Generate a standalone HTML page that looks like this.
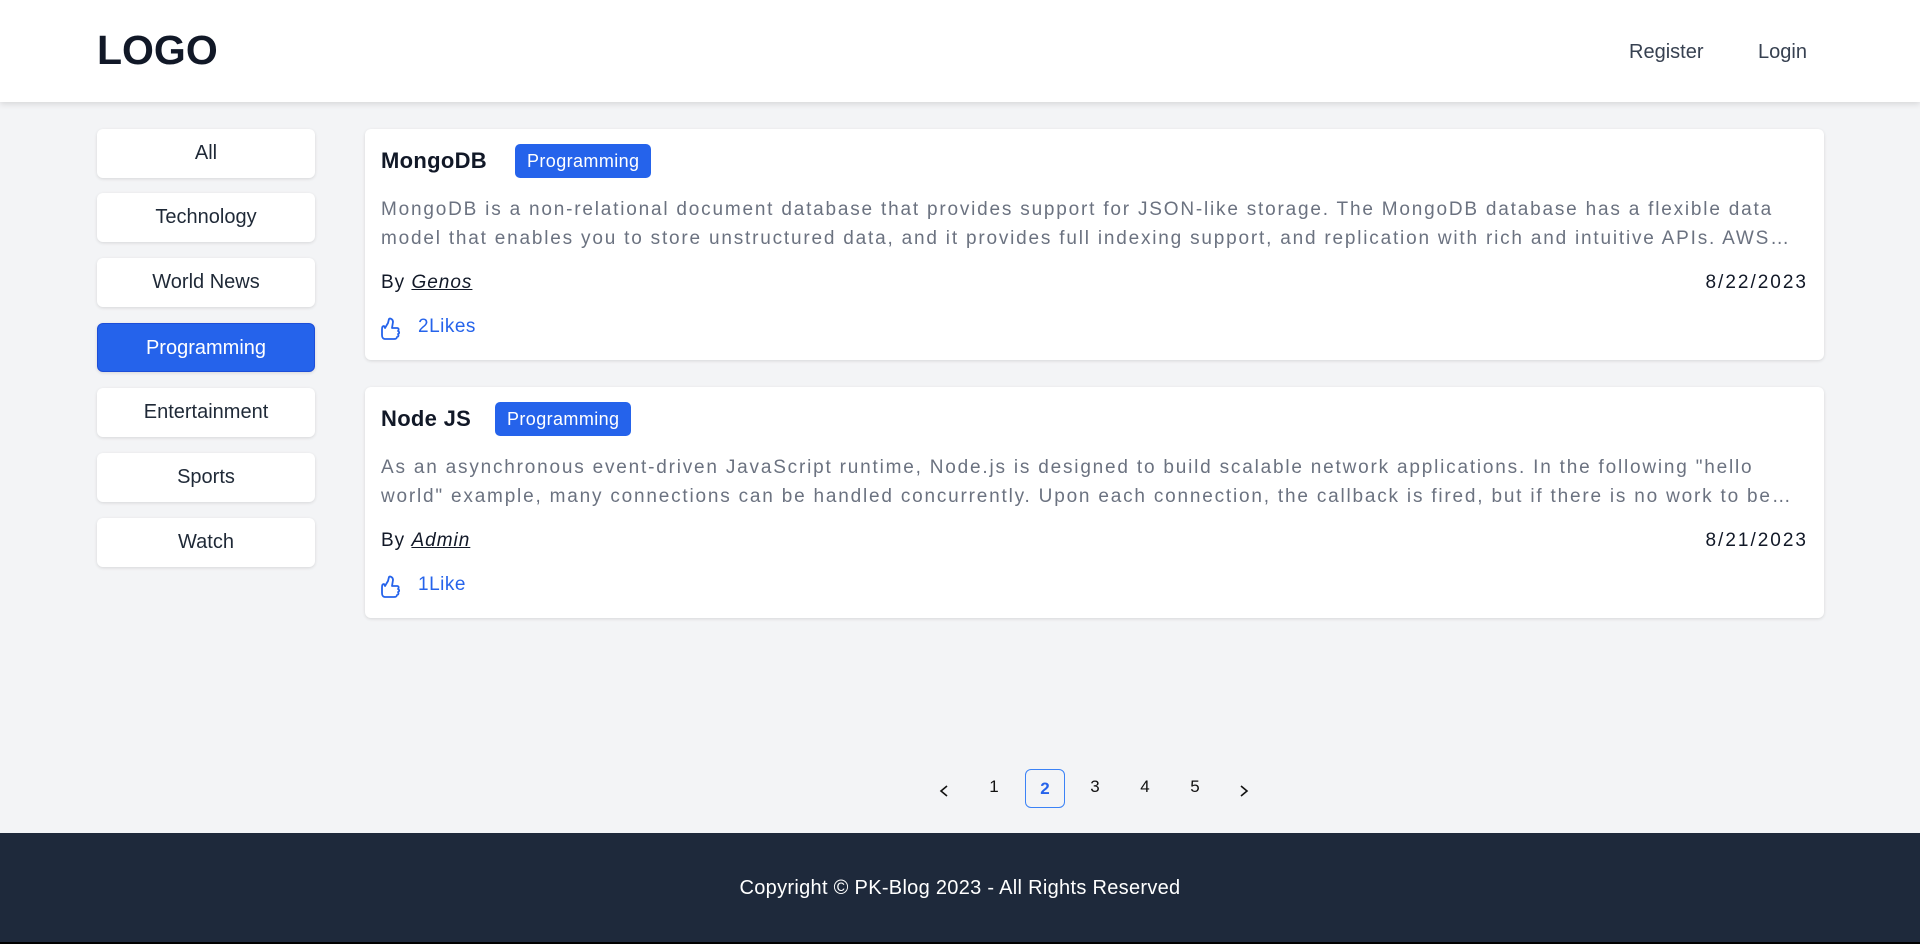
<!DOCTYPE html>
<html><head><meta charset="utf-8"><style>
*{box-sizing:border-box;margin:0;padding:0}
body{width:1920px;height:944px;background:#f3f4f6;font-family:"Liberation Sans",sans-serif;color:#111827;position:relative;overflow:hidden}
header{position:absolute;left:0;top:0;width:1920px;height:102px;background:#fff;box-shadow:0 2px 6px rgba(0,0,0,.12)}
.logo{position:absolute;left:97px;top:27px;font-size:41px;font-weight:bold;color:#111827}
.nav{position:absolute;top:41px;font-size:20px;color:#374151}
.side{position:absolute;left:97px;width:218px;height:49px;background:#fff;border-radius:6px;box-shadow:0 1px 3px rgba(0,0,0,.12);text-align:center;line-height:49px;font-size:20px;color:#1f2937}
.side.act{background:#2563eb;color:#fff;border:1px solid #1d4ed8}
.card{position:absolute;left:365px;width:1459px;height:231px;background:#fff;border-radius:6px;box-shadow:0 1px 3px rgba(0,0,0,.12)}
.title{position:absolute;left:16px;top:19px;font-size:22px;font-weight:bold;color:#111827;letter-spacing:.3px}
.badge{position:absolute;top:15px;height:34px;background:#2563eb;color:#fff;border-radius:5px;font-size:18px;line-height:34px;padding:0 12px;letter-spacing:.4px}
.desc{position:absolute;left:16px;top:66px;width:1430px;font-size:19px;line-height:29px;color:#6b7280;letter-spacing:1.8px;height:58px;overflow:hidden}
.by{position:absolute;left:16px;top:143px;font-size:19px;color:#111827;letter-spacing:1px}
.by i{text-decoration:underline}
.date{position:absolute;right:16px;top:143px;font-size:19px;color:#111827;letter-spacing:2px}
.like{position:absolute;left:16px;top:184px;font-size:19px;color:#2563eb;display:flex;align-items:center;letter-spacing:.5px}
.pg{position:absolute;top:777px;font-size:17px;color:#111;width:40px;text-align:center}
footer{position:absolute;left:0;top:833px;width:1920px;height:111px;background:#1e293b;border-bottom:2px solid #000}
footer p{text-align:center;color:#fff;font-size:20px;margin-top:44px;letter-spacing:.3px}
</style></head><body>
<header><div class="logo">LOGO</div><div class="nav" style="left:1629px">Register</div><div class="nav" style="left:1758px">Login</div></header>
<div class="side" style="top:129px">All</div>
<div class="side" style="top:193px">Technology</div>
<div class="side" style="top:258px">World News</div>
<div class="side act" style="top:323px">Programming</div>
<div class="side" style="top:388px">Entertainment</div>
<div class="side" style="top:453px">Sports</div>
<div class="side" style="top:518px">Watch</div>

<div class="card" style="top:129px">
<div class="title">MongoDB</div><div class="badge" style="left:150px">Programming</div>
<div class="desc">MongoDB is a non-relational document database that provides support for JSON-like storage. The MongoDB database has a flexible data model that enables you to store unstructured data, and it provides full indexing support, and replication with rich and intuitive APIs. AWS…</div>
<div class="by">By <i>Genos</i></div><div class="date">8/22/2023</div>
<div class="like"><svg width="22" height="28" viewBox="0 0 22 28" fill="none" stroke="#2563eb" stroke-width="1.8" stroke-linejoin="round"><path d="M3 13c-2 0-2 2-2 4v5c0 2 1 4 3 4h9c2 0 3-1 3-2 1 0 2-1 1-3 1 0 2-2 0-3 1-1 1-3-1-3h-5l1-6c0-3-3-4-4-3l-1 4-3 5z"/></svg><span style="margin-left:15px">2Likes</span></div>
</div>

<div class="card" style="top:387px">
<div class="title">Node JS</div><div class="badge" style="left:130px">Programming</div>
<div class="desc">As an asynchronous event-driven JavaScript runtime, Node.js is designed to build scalable network applications. In the following "hello world" example, many connections can be handled concurrently. Upon each connection, the callback is fired, but if there is no work to be…</div>
<div class="by">By <i>Admin</i></div><div class="date">8/21/2023</div>
<div class="like"><svg width="22" height="28" viewBox="0 0 22 28" fill="none" stroke="#2563eb" stroke-width="1.8" stroke-linejoin="round"><path d="M3 13c-2 0-2 2-2 4v5c0 2 1 4 3 4h9c2 0 3-1 3-2 1 0 2-1 1-3 1 0 2-2 0-3 1-1 1-3-1-3h-5l1-6c0-3-3-4-4-3l-1 4-3 5z"/></svg><span style="margin-left:15px">1Like</span></div>
</div>

<div class="pg" style="left:924px;top:783px"><svg width="12" height="14" viewBox="0 0 12 14"><path d="M9 2L3 7l6 5" fill="none" stroke="#111" stroke-width="1.6"/></svg></div>
<div class="pg" style="left:974px">1</div>
<div style="position:absolute;left:1025px;top:769px;width:40px;height:39px;border:1px solid #3b82f6;border-radius:6px;color:#2563eb;font-weight:bold;font-size:17px;text-align:center;line-height:37px">2</div>
<div class="pg" style="left:1075px">3</div>
<div class="pg" style="left:1125px">4</div>
<div class="pg" style="left:1175px">5</div>
<div class="pg" style="left:1224px;top:783px"><svg width="12" height="14" viewBox="0 0 12 14"><path d="M3 2l6 5-6 5" fill="none" stroke="#111" stroke-width="1.6"/></svg></div>

<footer><p>Copyright © PK-Blog 2023 - All Rights Reserved</p></footer>
</body></html>
